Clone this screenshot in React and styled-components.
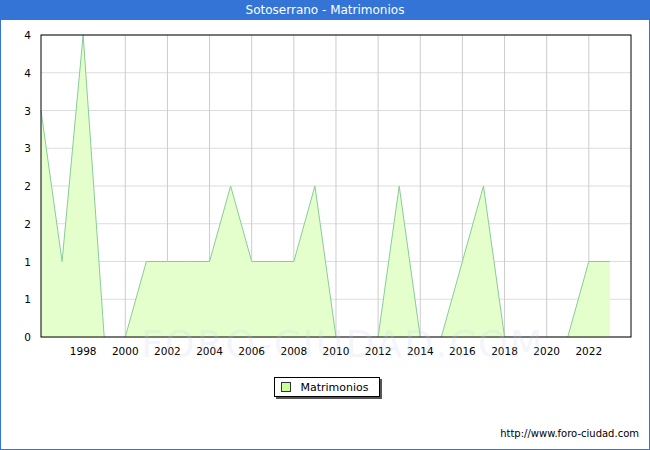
import React from "react";
import styled, { createGlobalStyle } from "styled-components";

const G = createGlobalStyle`
  html,body{margin:0;padding:0;background:#fff;}
  body{font-family:"DejaVu Sans",sans-serif;}
`;
const Frame = styled.div`
  width:650px;height:450px;box-sizing:border-box;border:1px solid #3474d6;border-top:none;
  display:flex;flex-direction:column;position:relative;background:#fff;
`;
const Header = styled.div`
  height:20px;background:#3474d6;color:#fff;font-size:12px;
  display:flex;align-items:center;justify-content:center;margin:0 -1px;
`;
const ChartBox = styled.div`height:340px;position:relative;`;
const LegendRow = styled.div`display:flex;justify-content:center;padding-top:17px;padding-left:4px;`;
const Legend = styled.div`
  display:flex;align-items:center;gap:9px;font-size:11px;color:#000;
  border:1px solid #000;padding:2px 10px 2px 6px;box-shadow:2px 2px 0 #555;height:14px;
`;
const Swatch = styled.span`width:8px;height:8px;border:1px solid #333;background:#ccff99;`;
const Footer = styled.div`
  position:absolute;right:10px;bottom:10px;font-size:10px;color:#000;
`;
const Watermark = styled.div`
  position:absolute;left:140px;top:322px;font-size:38px;color:rgba(200,205,235,0.2);letter-spacing:2px;
`;

const data = [3,1,4,0,0,1,1,1,1,2,1,1,1,2,0,0,0,2,0,0,1,2,0,0,0,0,1,1];
const x0=40,x1=630,yT=35,yB=337,step=21.07;
const X=i=>x0+i*step, Y=v=>yB-v*(yB-yT)/4;

export default function App(){
  const pts=data.map((v,i)=>[X(i),Y(v)]);
  const poly=`${x0},${yB} `+pts.map(p=>p.join(",")).join(" ")+` ${X(data.length-1)},${yB}`;
  const segs=[];
  for(let i=0;i<data.length-1;i++){ if(data[i]||data[i+1]) segs.push(<line key={i} x1={pts[i][0]} y1={pts[i][1]} x2={pts[i+1][0]} y2={pts[i+1][1]} stroke="#88cc99" strokeWidth="1"/>); }
  const ylab=["0","1","1","2","2","3","3","4","4"];
  return (<><G/><Frame>
    <Header>Sotoserrano - Matrimonios</Header>
    <ChartBox>
      <svg width="648" height="340" viewBox="0 20 648 340" style={{display:"block"}} fontFamily="DejaVu Sans" fontSize="10.5">
        {ylab.map((l,i)=>{const y=yB-i*(yB-yT)/8;return <g key={i}>
          <line x1={x0} x2={x1} y1={y} y2={y} stroke="#dddddd"/>
          <text x={30} y={y+4} textAnchor="end">{l}</text></g>;})}
        {Array.from({length:13},(_,k)=>{const i=2+k*2;const x=X(i);return <g key={k}>
          <line x1={x} x2={x} y1={yT} y2={yB} stroke="#cccccc"/>
          <text x={x} y={yB+18} textAnchor="middle">{1996+i}</text></g>;})}
        <polygon points={poly} fill="#e5ffcc"/>
        {segs}
        <rect x={x0} y={yT} width={x1-x0} height={yB-yT} fill="none" stroke="#000"/>
      </svg>
    </ChartBox>
    <Watermark>FORO-CIUDAD.COM</Watermark>
    <LegendRow><Legend><Swatch/>Matrimonios</Legend></LegendRow>
    <Footer>http://www.foro-ciudad.com</Footer>
  </Frame></>);
}
